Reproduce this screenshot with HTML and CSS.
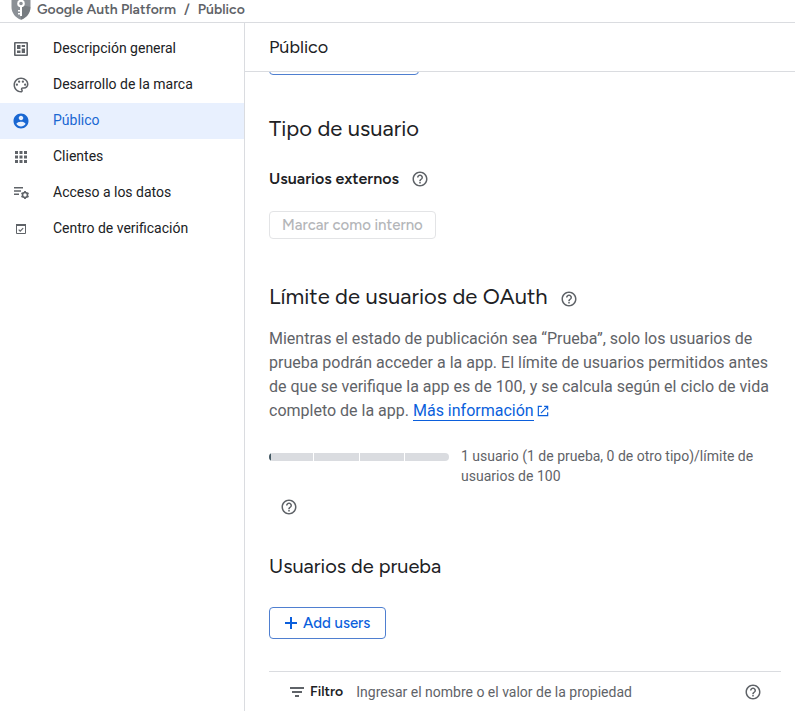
FILE: index.html
```html
<!DOCTYPE html>
<html lang="es">
<head>
<meta charset="utf-8">
<meta name="viewport" content="width=device-width, initial-scale=1">
<title>Público – Google Auth Platform</title>
<link rel="stylesheet" href="styles.css">
</head>
<body>
<svg class="sprite" aria-hidden="true">
  <symbol id="help" viewBox="0 0 24 24"><path d="M11 18h2v-2h-2v2zm1-16C6.480 2 2 6.480 2 12s4.480 10 10 10 10-4.480 10-10S17.520 2 12 2zm0 18c-4.410 0-8-3.590-8-8s3.590-8 8-8 8 3.590 8 8-3.590 8-8 8zm0-14c-2.210 0-4 1.790-4 4h2c0-1.100.9-2 2-2s2 .9 2 2c0 2-3 1.750-3 5h2c0-2.250 3-2.500 3-5 0-2.210-1.790-4-4-4z"/></symbol>
</svg>

<header class="topbar">
  <svg class="shield" viewBox="0 0 20 24" aria-hidden="true">
    <path fill="#8b9096" d="M10 0 .5 4v7c0 5.800 4 11 9.500 12.800 5.500-1.800 9.500-7 9.500-12.800V4z"/>
    <path fill="#5f6368" opacity=".45" d="M11 9l8.500 2c0 5.800-4 11-9.500 12.800V9z"/>
    <circle cx="10" cy="7.500" r="2.800" fill="none" stroke="#fff" stroke-width="2"/>
    <path fill="#fff" d="M9 10.500h2V20H9zM7 14h2.500v1.600H7zM7 17h2.500v1.600H7z"/>
  </svg>
  <nav class="crumbs" aria-label="Ruta">
    <a href="#">Google Auth Platform</a><span>/</span><a href="#">Público</a>
  </nav>
</header>

<div class="shell">
  <nav class="sidebar" aria-label="Secciones">
    <a class="item" href="#">
      <svg class="icon" viewBox="0 0 18 18"><path fill-rule="evenodd" d="M3 2h12a1 1 0 0 1 1 1v12a1 1 0 0 1-1 1H3a1 1 0 0 1-1-1V3a1 1 0 0 1 1-1zm.600 1.600v10.800h10.800V3.600z"/><path d="M5 5h3.500v4H5zM9.700 5H13v2H9.700zM9.700 8.500H13V13H9.700zM5 10.500h3.500V13H5z"/></svg>
      Descripción general
    </a>
    <a class="item" href="#">
      <svg class="icon" viewBox="0 0 24 24"><path d="M12 22C6.490 22 2 17.510 2 12S6.490 2 12 2s10 4.040 10 9c0 3.310-2.690 6-6 6h-1.770c-.28 0-.5.22-.5.5 0 .12.050.230.130.330.410.470.640 1.060.640 1.670 0 1.380-1.120 2.500-2.500 2.500zm0-18c-4.410 0-8 3.590-8 8s3.590 8 8 8c.28 0 .5-.22.5-.5 0-.16-.08-.28-.14-.35-.41-.46-.63-1.050-.63-1.650 0-1.380 1.120-2.500 2.500-2.500H16c2.210 0 4-1.790 4-4 0-3.860-3.590-7-8-7z"/><circle cx="6.500" cy="11.500" r="1.500"/><circle cx="9.500" cy="7.500" r="1.500"/><circle cx="14.500" cy="7.500" r="1.500"/><circle cx="17.500" cy="11.500" r="1.500"/></svg>
      Desarrollo de la marca
    </a>
    <a class="item active" href="#" aria-current="page">
      <svg class="icon" viewBox="0 0 24 24"><path d="M12 2C6.480 2 2 6.480 2 12s4.480 10 10 10 10-4.480 10-10S17.520 2 12 2zm0 3c1.660 0 3 1.340 3 3s-1.340 3-3 3-3-1.340-3-3 1.340-3 3-3zm0 14.200c-2.500 0-4.710-1.280-6-3.220.03-1.990 4-3.080 6-3.080 1.990 0 5.970 1.090 6 3.080-1.290 1.940-3.500 3.220-6 3.220z"/></svg>
      Público
    </a>
    <a class="item" href="#">
      <svg class="icon" viewBox="0 0 24 24"><path d="M4 8h4V4H4v4zm6 12h4v-4h-4v4zm-6 0h4v-4H4v4zm0-6h4v-4H4v4zm6 0h4v-4h-4v4zm6-10v4h4V4h-4zm-6 4h4V4h-4v4zm6 6h4v-4h-4v4zm0 6h4v-4h-4v4z"/></svg>
      Clientes
    </a>
    <a class="item" href="#">
      <svg class="icon" viewBox="0 0 18 18"><path d="M2 3h9v1.500H2zM2 6.200h7v1.500H2zM2 9.400h5v1.500H2z"/><circle cx="13" cy="11" r="2.500" fill="none" stroke="currentColor" stroke-width="1.600"/><path fill="none" stroke="currentColor" stroke-width="1.800" d="M13 7v1.500M13 13.500V15M9.500 9l1.300.8M15.200 12.200l1.300.8M9.500 13l1.300-.8M15.200 9.800l1.300-.8"/></svg>
      Acceso a los datos
    </a>
    <a class="item" href="#">
      <svg class="icon" viewBox="0 0 18 18"><path d="M4.500 4.500h9v9h-9z" fill="none" stroke="currentColor"/><path d="M4 4h10v2H4z"/><path d="m6.700 9.600 1.500 1.500 3-3" fill="none" stroke="currentColor" stroke-width="1.200"/></svg>
      Centro de verificación
    </a>
  </nav>

  <main class="page">
    <div class="page-head"><h1>Público</h1></div>
    <div class="content">
      <button class="btn publish" type="button" aria-label="Volver a prueba"></button>

      <section class="user-type">
        <h2>Tipo de usuario</h2>
        <div class="row external">
          <h3>Usuarios externos</h3>
          <button class="help" type="button" aria-label="Ayuda"><svg><use href="#help"/></svg></button>
        </div>
        <button class="btn small" type="button" disabled>Marcar como interno</button>
      </section>

      <section class="limit">
        <div class="row heading">
          <h2>Límite de usuarios de OAuth</h2>
          <button class="help" type="button" aria-label="Ayuda"><svg><use href="#help"/></svg></button>
        </div>
        <p>Mientras el estado de publicación sea “Prueba”, solo los usuarios de prueba podrán acceder a la app. El límite de usuarios permitidos antes de que se verifique la app es de 100, y se calcula según el ciclo de vida completo de la app. <a class="more" href="#">Más información</a><svg class="external-icon" viewBox="0 0 24 24" aria-hidden="true"><path d="M19 19H5V5h5V3H3v18h18v-7h-2v5zM14 3v2h3.600l-9.800 9.800 1.400 1.400L19 6.400V10h2V3h-7z"/></svg></p>
        <div class="quota">
          <div class="bar" aria-hidden="true"><i class="used"></i><i></i><i></i><i></i></div>
          <div class="quota-text">1 usuario (1 de prueba, 0 de otro tipo)/límite de usuarios de 100</div>
        </div>
        <button class="help quota-help" type="button" aria-label="Ayuda"><svg><use href="#help"/></svg></button>
      </section>

      <section class="testers">
        <h2 class="minor">Usuarios de prueba</h2>
        <button class="btn add" type="button"><svg viewBox="0 0 12 12" aria-hidden="true"><path d="M5 0h2v5h5v2H7v5H5V7H0V5h5z"/></svg>Add users</button>
        <div class="filter">
          <svg class="icon" viewBox="0 0 18 18" aria-hidden="true"><path d="M2 4h14v2H2zM4 8h10v2H4zM7 12h4v2H7z"/></svg>
          <label for="filter">Filtro</label>
          <input id="filter" type="text" placeholder="Ingresar el nombre o el valor de la propiedad">
          <button class="help" type="button" aria-label="Ayuda"><svg><use href="#help"/></svg></button>
        </div>
      </section>
    </div>
  </main>
</div>
</body>
</html>
```
FILE: styles.css
```css
:root {
  --text: #202124;
  --muted: #5f6368;
  --line: #dadce0;
  --blue: #0b5fdc;
  --display: "Google Sans", "Figtree", Lato, "Open Sans", sans-serif;
}

* { box-sizing: border-box; }

body {
  margin: 0;
  height: 100vh;
  display: flex;
  flex-direction: column;
  overflow: hidden;
  background: #fff;
  color: var(--text);
  font: 14px/20px Roboto, sans-serif;
}

h1, h2, h3, p { margin: 0; }
h1, h2, h3 { font-family: var(--display); font-weight: 400; }
h1 { font-size: 18px; line-height: 24px; }
h2 { font-size: 22px; line-height: 28px; }
h2.minor { font-size: 20px; }
h3 { font-size: 16px; line-height: 24px; font-weight: 600; }
a { color: inherit; text-decoration: none; }
svg { fill: currentColor; flex: none; }
.sprite { display: none; }
.icon { width: 18px; height: 18px; color: var(--muted); }
.row { display: flex; align-items: center; }

.topbar {
  flex: none;
  display: flex;
  align-items: center;
  height: 23px;
  padding: 0 11px;
  gap: 6px;
  border-bottom: 1px solid var(--line);
  color: var(--muted);
}
.shield { width: 20px; height: 24px; margin-top: -6px; }
.crumbs {
  display: flex;
  gap: 8px;
  margin-top: -3px;
  font: 600 14px/20px var(--display);
}

.shell { flex: 1; min-height: 0; display: flex; }

.sidebar {
  flex: none;
  width: 245px;
  padding-top: 8px;
  border-right: 1px solid var(--line);
}
.item {
  display: flex;
  align-items: center;
  gap: 23px;
  height: 36px;
  padding: 0 12px 2px;
}
.item .icon { margin-top: 2px; }
.item.active, .item.active .icon { color: #1967d2; }
.item.active { background: #e8f0fe; }

.page { flex: 1; min-width: 0; display: flex; flex-direction: column; }
.page-head {
  flex: none;
  padding: 12px 24px;
  border-bottom: 1px solid var(--line);
}
.content {
  flex: 1;
  min-height: 0;
  overflow: hidden;
  padding: 0 14px 0 24px;
}

.btn {
  display: flex;
  align-items: center;
  height: 32px;
  padding: 0 15px;
  border: 1px solid #4f7fd0;
  border-radius: 4px;
  background: #fff;
  color: var(--blue);
  font: 500 15px/20px var(--display);
}
.btn.small { height: 28px; padding: 0 12px; }
.btn:disabled { border-color: #e3e4e6; color: #b4b6b9; }
.btn.publish { width: 150px; margin-top: -29px; }
.btn.add { gap: 6px; margin-top: 27px; }
.btn.add svg { width: 12px; height: 12px; }

.help {
  display: flex;
  padding: 0;
  border: 0;
  background: none;
  color: var(--muted);
}
.help svg { width: 18px; height: 18px; }

.user-type { margin-top: 40px; }
.external { gap: 12px; margin: 24px 0 20px; }

.limit { margin-top: 44px; }
.heading { gap: 12px; }
.heading .help { padding-top: 4px; }
.limit p {
  margin-top: 16px;
  color: var(--muted);
  font-size: 16px;
  line-height: 24px;
}
.more { border-bottom: 1px solid; color: var(--blue); }
.external-icon {
  width: 14px;
  height: 14px;
  margin-left: 2px;
  color: var(--blue);
  vertical-align: -2px;
}

.quota { display: flex; gap: 12px; margin-top: 23px; color: var(--muted); }
.bar {
  flex: none;
  display: flex;
  gap: 1px;
  width: 180px;
  height: 8px;
  margin-top: 7px;
  border-radius: 4px;
  overflow: hidden;
}
.bar i { flex: 1; background: var(--line); }
.bar .used { box-shadow: inset 2px 0 #455a64; }
.quota-help { margin: 12px 0 0 11px; }

.testers { margin-top: 36px; }
.filter {
  display: flex;
  align-items: center;
  height: 40px;
  margin-top: 32px;
  padding: 0 19px;
  border-top: 1px solid var(--line);
}
.filter label { margin: 0 13px 0 4px; font: 600 14px/20px var(--display); }
.filter input {
  flex: 1;
  min-width: 0;
  padding: 0;
  border: 0;
  outline: 0;
  color: var(--text);
  font: inherit;
}
.filter input::placeholder { color: var(--muted); opacity: 1; }
```
